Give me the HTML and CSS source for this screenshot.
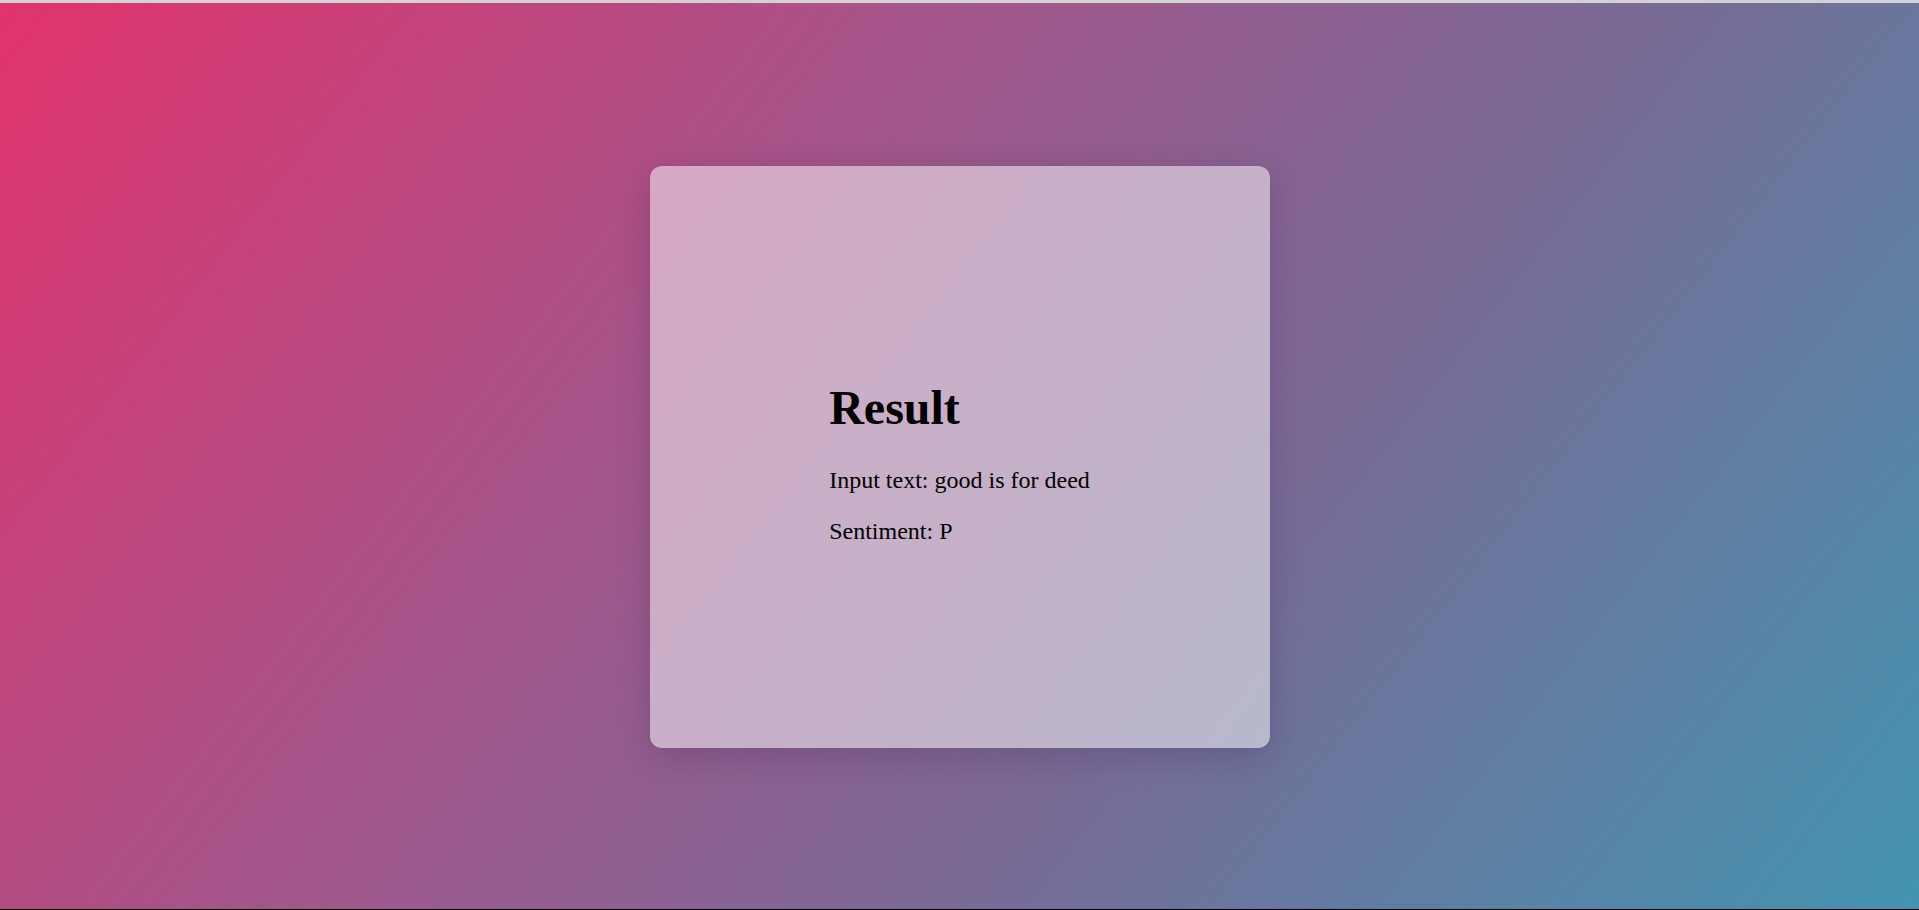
FILE: index.html
```html
<!DOCTYPE html>
<html lang="en">
<head>
<meta charset="utf-8">
<title>Result</title>
<link rel="stylesheet" href="styles.css">
</head>
<body>
<div class="topline"></div>
<main class="stage">
  <section class="card">
    <div class="content">
      <h1 class="title">Result</h1>
      <p class="line">Input text: good is for deed</p>
      <p class="line">Sentiment: P</p>
    </div>
  </section>
</main>
<div class="bottomline"></div>
</body>
</html>
```

FILE: styles.css
```css
html, body {
  margin: 0;
  padding: 0;
  height: 100%;
}
body {
  display: flex;
  flex-direction: column;
  font-family: "Liberation Serif", "Times New Roman", serif;
  color: #000;
  overflow: hidden;
}
.topline {
  height: 3px;
  background: #d3d3d3;
  flex: none;
}
.bottomline {
  height: 1px;
  background: #000;
  flex: none;
}
.stage {
  flex: 1;
  display: flex;
  align-items: center;
  justify-content: center;
  background: linear-gradient(128deg, #e2336d 0%, #a6548a 35%, #786b96 64%, #4394b0 100%);
}
.card {
  width: 620px;
  height: 582px;
  border-radius: 12px;
  background: rgba(255, 255, 255, 0.5);
  box-shadow: 0 8px 32px rgba(40, 20, 70, 0.22);
  display: flex;
  align-items: center;
  justify-content: center;
  margin-top: 1px;
}
.content {
  display: flex;
  flex-direction: column;
  padding-top: 12px;
}
.title {
  font-size: 48px;
  font-weight: bold;
  margin: 0 0 32px 0;
}
.line {
  font-size: 24px;
  margin: 0 0 24px 0;
}
.line:last-child {
  margin-bottom: 0;
}
```
